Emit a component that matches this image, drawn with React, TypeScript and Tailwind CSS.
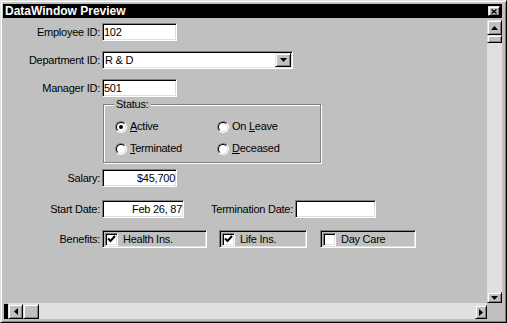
import React from "react";

const sunken =
  "border border-t-[#808080] border-l-[#808080] border-r-white border-b-white shadow-[inset_1px_1px_0_#000,inset_-1px_-1px_0_#dfdfdf]";
const raised =
  "bg-[#c0c0c0] border border-t-[#dfdfdf] border-l-[#dfdfdf] border-r-black border-b-black shadow-[inset_1px_1px_0_#fff,inset_-1px_-1px_0_#808080]";

type Dir = "up" | "down" | "left" | "right";

function Tri({ dir }: { dir: Dir }) {
  const vertical = dir === "up" || dir === "down";
  const pts: Record<Dir, string> = {
    up: "3.5,0 7,4 0,4",
    down: "0,0 7,0 3.5,4",
    left: "4,0 4,7 0,3.5",
    right: "0,0 0,7 4,3.5",
  };
  return (
    <svg width={vertical ? 7 : 4} height={vertical ? 4 : 7} viewBox={vertical ? "0 0 7 4" : "0 0 4 7"}>
      <polygon points={pts[dir]} fill="#000" />
    </svg>
  );
}

function Radio({ checked, children }: { checked?: boolean; children: React.ReactNode }) {
  return (
    <div className="flex items-center h-[13px]">
      <div className="w-[12px] h-[12px] rounded-full border border-t-[#808080] border-l-[#808080] border-r-white border-b-white">
        <div className="w-full h-full rounded-full bg-white border border-t-black border-l-black border-r-[#dfdfdf] border-b-[#dfdfdf] flex items-center justify-center">
          {checked && <div className="w-[4px] h-[4px] rounded-full bg-black" />}
        </div>
      </div>
      <span className="ml-[3px]">{children}</span>
    </div>
  );
}

function Benefit({ checked, label, width }: { checked?: boolean; label: string; width: string }) {
  return (
    <div className={`${width} h-[18px] bg-[#c0c0c0] ${sunken} flex items-center pl-[2px]`}>
      <div className={`w-[13px] h-[13px] bg-white ${sunken} flex items-center justify-center`}>
        {checked && (
          <svg width="9" height="8" viewBox="0 0 9 8">
            <polyline points="1,3.5 3.5,6 8,1" fill="none" stroke="#000" strokeWidth="2" />
          </svg>
        )}
      </div>
      <span className="ml-[5px]">{label}</span>
    </div>
  );
}

export default function App() {
  return (
    <div
      className="w-[507px] h-[323px] bg-[#c0c0c0] border border-t-[#dfdfdf] border-l-[#dfdfdf] border-r-black border-b-black shadow-[inset_1px_1px_0_#fff,inset_-1px_-1px_0_#808080] pl-[2px] pr-[4px] pt-[3px] pb-[3px] flex flex-col text-black text-[11px] leading-none"
      style={{ fontFamily: '"Liberation Sans", Arial, sans-serif' }}
    >
      {/* title bar */}
      <div className="h-[14px] bg-black flex items-center justify-between pl-[2px] pr-[2px]">
        <span className="text-white font-bold text-[12px]">DataWindow Preview</span>
        <div className={`w-[12px] h-[10px] ${raised} flex items-center justify-center`}>
          <svg width="6" height="5" viewBox="0 0 6 5">
            <path d="M0.5 0.5 L5.5 4.5 M5.5 0.5 L0.5 4.5" stroke="#000" strokeWidth="1.4" />
          </svg>
        </div>
      </div>

      <div className="flex-1 flex min-h-0">
        <div className="flex-1 flex flex-col min-w-0">
          {/* form */}
          <div className="flex-1 flex flex-col pt-[5px] tracking-[-0.25px]">
            <div className="flex items-center h-[18px]">
              <span className="w-[97px] text-right">Employee ID:</span>
              <div className={`ml-[2px] w-[75px] h-full bg-white ${sunken} pl-[1px] flex items-center`}>102</div>
            </div>

            <div className="flex items-center h-[18px] mt-[10px]">
              <span className="w-[97px] text-right">Department ID:</span>
              <div className={`ml-[2px] w-[191px] h-full bg-white ${sunken} p-[1px] flex items-center`}>
                <span className="flex-1 pl-[1px]">R &amp; D</span>
                <div className={`w-[16px] h-full ${raised} flex items-center justify-center`}>
                  <Tri dir="down" />
                </div>
              </div>
            </div>

            <div className="flex items-center h-[18px] mt-[10px]">
              <span className="w-[97px] text-right">Manager ID:</span>
              <div className={`ml-[2px] w-[75px] h-full bg-white ${sunken} pl-[1px] flex items-center`}>501</div>
            </div>

            {/* status group */}
            <div className="relative ml-[100px] mt-[7px] w-[218px] h-[59px] border border-[#808080] shadow-[inset_1px_1px_0_#fff,1px_1px_0_#fff] pl-[11px] pt-[15px]">
              <span className="absolute -top-[6px] left-[10px] px-[2px] bg-[#c0c0c0]">Status:</span>
              <div className="grid grid-cols-[102px_auto] gap-y-[9px]">
                <Radio checked>
                  <u className="underline-offset-1">A</u>ctive
                </Radio>
                <Radio>
                  On <u className="underline-offset-1">L</u>eave
                </Radio>
                <Radio>
                  <u className="underline-offset-1">T</u>erminated
                </Radio>
                <Radio>
                  <u className="underline-offset-1">D</u>eceased
                </Radio>
              </div>
            </div>

            <div className="flex items-center h-[18px] mt-[6px]">
              <span className="w-[97px] text-right">Salary:</span>
              <div className={`ml-[2px] w-[75px] h-full bg-white ${sunken} pr-[1px] flex items-center justify-end`}>
                $45,700
              </div>
            </div>

            <div className="flex items-center h-[18px] mt-[13px]">
              <span className="w-[97px] text-right">Start Date:</span>
              <div className={`ml-[2px] w-[82px] h-full bg-white ${sunken} pr-[1px] flex items-center justify-end`}>
                Feb 26, 87
              </div>
              <span className="w-[109px] text-right">Termination Date:</span>
              <div className={`ml-[2px] w-[81px] h-full bg-white ${sunken}`} />
            </div>

            <div className="flex items-center h-[18px] mt-[12px]">
              <span className="w-[97px] text-right">Benefits:</span>
              <div className="ml-[2px] flex gap-[12px]">
                <Benefit checked label="Health Ins." width="w-[105px]" />
                <Benefit checked label="Life Ins." width="w-[88px]" />
                <Benefit label="Day Care" width="w-[96px] ml-[1px]" />
              </div>
            </div>
          </div>

          {/* horizontal scrollbar */}
          <div className="h-[16px] flex items-end bg-[#e0e0e0]">
            <div className="w-[5px] h-full bg-[#c0c0c0] pl-[1px] pt-[1px]">
              <div className="w-[4px] h-full bg-black" />
            </div>
            <div className={`w-[15px] h-[15px] ${raised} flex items-center justify-center`}>
              <Tri dir="left" />
            </div>
            <div className={`w-[16px] h-[15px] ${raised}`} />
            <div className="flex-1" />
            <div className={`w-[12px] h-[14px] ${raised} flex items-center justify-center`}>
              <Tri dir="right" />
            </div>
          </div>
        </div>

        {/* vertical scrollbar */}
        <div className="w-[15px] flex flex-col">
          <div className="flex-1 flex flex-col bg-[#e0e0e0] border-t-[2px] border-[#c0c0c0]">
            <div className={`h-[15px] ${raised} flex items-center justify-center`}>
              <Tri dir="up" />
            </div>
            <div className={`h-[8px] ${raised}`} />
            <div className="flex-1" />
            <div className={`h-[11px] ${raised} flex items-center justify-center`}>
              <Tri dir="down" />
            </div>
          </div>
          <div className="h-[16px] bg-[#c0c0c0]" />
        </div>
      </div>
    </div>
  );
}
